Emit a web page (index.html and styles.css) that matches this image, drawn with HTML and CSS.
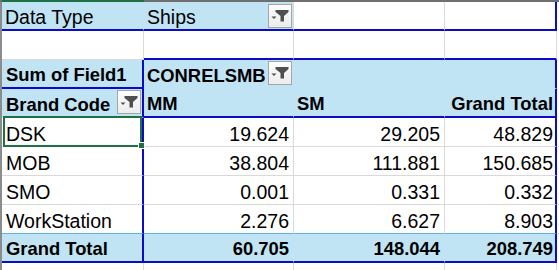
FILE: index.html
```html
<!DOCTYPE html>
<html lang="en">
<head>
<meta charset="utf-8">
<title>Pivot table</title>
<link rel="stylesheet" href="styles.css">
</head>
<body>
<div class="sheet">
  <div class="edge-corner"></div>
  <div class="edge-top edge-top--active"></div>
  <div class="edge-top"></div>
  <div class="edge-top"></div>
  <div class="edge-top"></div>
  <div class="edge-top"></div>
  <div class="edge-left"></div>
  <div class="col-e"></div>

  <!-- row 1 -->
  <div class="cell hdr br-none bb-blue">Data Type</div>
  <div class="cell hdr bb-blue has-btn">Ships<span class="filter filter--flush"><svg viewBox="0 0 22 22" width="22" height="22"><polygon points="6.5,5 19.5,5 19.5,7 15,11 15,16.5 11.5,16.5 11.5,11 6.5,7"/><polygon points="2.5,11.5 7.5,11.5 5,14"/></svg></span></div>
  <div class="cell bb-blue"></div>
  <div class="cell d br-blue bb-blue"></div>

  <!-- row 2 -->
  <div class="cell"></div>
  <div class="cell bb-blue"></div>
  <div class="cell bb-blue"></div>
  <div class="cell d bb-blue"></div>

  <!-- row 3 -->
  <div class="cell hdr bold a br-blue bb-blue">Sum of Field1</div>
  <div class="cell hdr bold br-none bb-none has-btn">CONRELSMB<span class="filter"><svg viewBox="0 0 22 22" width="22" height="22"><polygon points="6.5,5 19.5,5 19.5,7 15,11 15,16.5 11.5,16.5 11.5,11 6.5,7"/><polygon points="2.5,11.5 7.5,11.5 5,14"/></svg></span></div>
  <div class="cell hdr br-none bb-none"></div>
  <div class="cell hdr d br-blue bb-none"></div>

  <!-- row 4 -->
  <div class="cell hdr bold a br-blue has-btn">Brand Code<span class="filter"><svg viewBox="0 0 22 22" width="22" height="22"><polygon points="6.5,5 19.5,5 19.5,7 15,11 15,16.5 11.5,16.5 11.5,11 6.5,7"/><polygon points="2.5,11.5 7.5,11.5 5,14"/></svg></span></div>
  <div class="cell hdr bold br-none bb-blue">MM</div>
  <div class="cell hdr bold br-none bb-blue">SM</div>
  <div class="cell hdr bold d num br-blue bb-blue">Grand Total</div>

  <!-- data rows -->
  <div class="cell a br-blue active">DSK</div>
  <div class="cell num">19.624</div>
  <div class="cell num">29.205</div>
  <div class="cell d num br-blue">48.829</div>

  <div class="cell a br-blue">MOB</div>
  <div class="cell num">38.804</div>
  <div class="cell num">111.881</div>
  <div class="cell d num br-blue">150.685</div>

  <div class="cell a br-blue">SMO</div>
  <div class="cell num">0.001</div>
  <div class="cell num">0.331</div>
  <div class="cell d num br-blue">0.332</div>

  <div class="cell a br-blue bb-total">WorkStation</div>
  <div class="cell num bb-total">2.276</div>
  <div class="cell num bb-total">6.627</div>
  <div class="cell d num br-blue bb-total">8.903</div>

  <!-- grand total -->
  <div class="cell hdr bold a br-blue bb-blue">Grand Total</div>
  <div class="cell hdr bold num br-none bb-blue">60.705</div>
  <div class="cell hdr bold num br-none bb-blue">148.044</div>
  <div class="cell hdr bold d num br-blue bb-blue">208.749</div>

  <!-- row 10 -->
  <div class="cell"></div>
  <div class="cell"></div>
  <div class="cell"></div>
  <div class="cell d"></div>
</div>
</body>
</html>
```

FILE: styles.css
```css
html, body {
  margin: 0;
  padding: 0;
  background: #ffffff;
  overflow: hidden;
}

.sheet {
  display: grid;
  grid-template-columns: 2px 142px 150px 151px 112px 2px;
  grid-template-rows: 2px repeat(10, 29px);
  font-family: "Liberation Sans", Arial, sans-serif;
  color: #000000;
}

.edge-corner { background: #6f6f6f; }
.edge-top { background: #6f6f6f; }
.edge-top--active { background: #1e7145; }

.edge-left {
  grid-column: 1;
  grid-row: 2 / -1;
  background: #8c8c8c;
}

.col-e {
  grid-column: 6;
  grid-row: 2 / -1;
  background: #ffffff;
}

.cell {
  box-sizing: border-box;
  display: flex;
  align-items: flex-end;
  padding: 0 3px 1px 3px;
  border-right: 1px solid #d9d9d9;
  border-bottom: 1px solid #d9d9d9;
  font-size: 19.5px;
  line-height: 22px;
  white-space: nowrap;
  position: relative;
}

.cell.a { padding-left: 4px; }

.hdr { background: #c1e4f5; }

.bold {
  font-weight: bold;
  font-size: 18.4px;
}

.num {
  justify-content: flex-end;
  padding-right: 4px;
}

.num.d { padding-right: 2px; }

.br-none { border-right-color: transparent; }
.bb-none { border-bottom-color: transparent; }
.br-blue { border-right: 2px solid #0c0cc8; }
.bb-blue { border-bottom: 2px solid #0c0cc8; }
.bb-total { border-bottom-color: #5cb3e2; }

.has-btn {
  justify-content: space-between;
  padding-right: 1px;
}

.filter {
  box-sizing: border-box;
  width: 24px;
  height: 24px;
  border: 1px solid #a6a6a6;
  background: linear-gradient(#fdfdfd, #ececec);
  align-self: flex-end;
  margin-bottom: 2px;
  display: block;
  flex: none;
}

.filter--flush { margin-bottom: 0; }

.filter svg {
  display: block;
  fill: #4f4f4f;
}

.active::before {
  content: "";
  position: absolute;
  top: -2px;
  left: 1px;
  right: 0;
  bottom: -1px;
  border: 2px solid #1e7145;
  z-index: 2;
}

.active::after {
  content: "";
  position: absolute;
  right: -3px;
  bottom: -3px;
  width: 5px;
  height: 5px;
  background: #1e7145;
  border: 1px solid #ffffff;
  z-index: 3;
}
```
